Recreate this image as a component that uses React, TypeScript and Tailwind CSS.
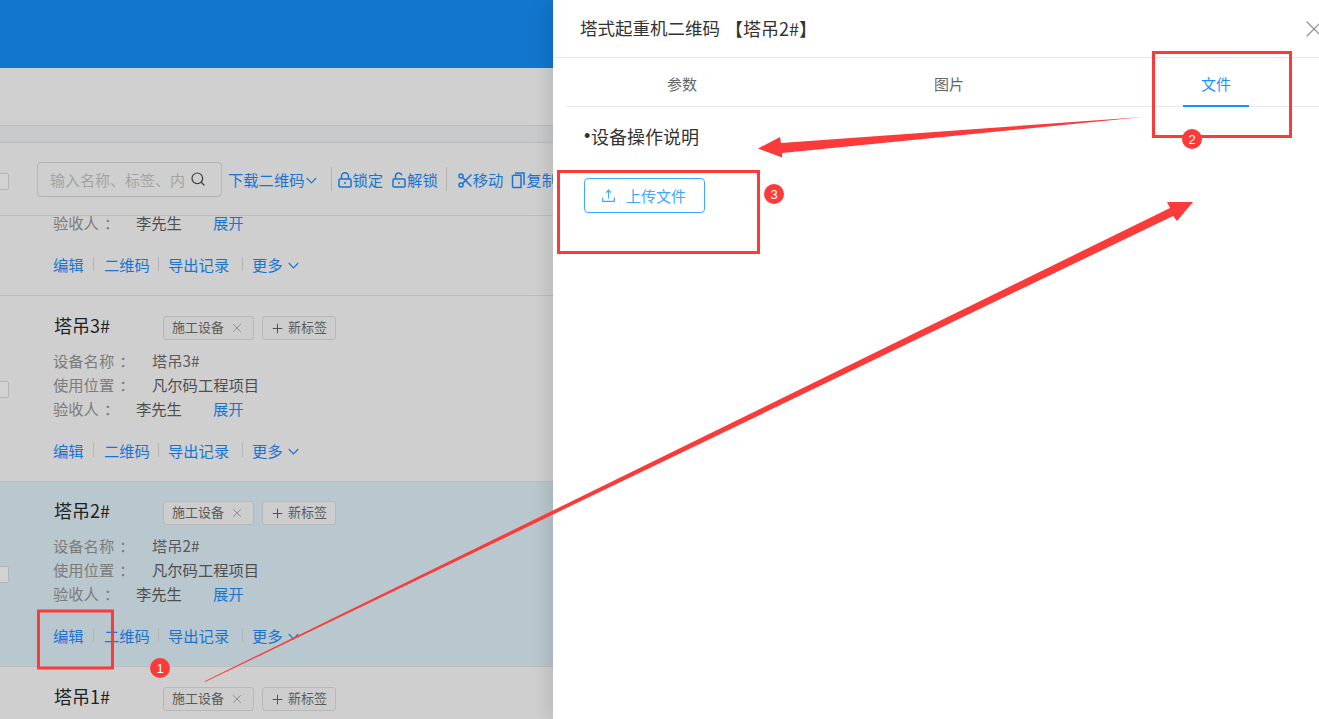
import React from "react";
import { Search, X, Plus } from "lucide-react";

const FONT = "font-['Noto_Sans_CJK_SC','Noto_Sans',sans-serif]";

function Chevron({ className }: { className?: string }) {
  return (
    <svg className={className} width="11" height="7" viewBox="0 0 11 7" fill="none" stroke="currentColor" strokeWidth="1.1">
      <polyline points="0.8,1 5.5,6 10.2,1" />
    </svg>
  );
}

function LockIcon({ open, className }: { open?: boolean; className?: string }) {
  return (
    <svg className={className} width="14" height="16" viewBox="0 0 14 16" fill="none" stroke="currentColor" strokeWidth="1.5">
      <rect x="1" y="7" width="12" height="8" rx="1" />
      <path d={open ? "M3.5 7V4.2a3.3 3.3 0 0 1 6.4 -1" : "M3.5 7V4.2a3.5 3.5 0 0 1 7 0V7"} />
      <path d="M7 10v2" />
    </svg>
  );
}

function ScissorsIcon({ className }: { className?: string }) {
  return (
    <svg className={className} width="14" height="15" viewBox="0 0 14 15" fill="none" stroke="currentColor" strokeWidth="1.5">
      <circle cx="3" cy="3" r="2" />
      <circle cx="3" cy="12" r="2" />
      <path d="M4.5 4.4 13.5 13.5M4.5 10.6 13.5 1.5" />
    </svg>
  );
}

function CopyIcon({ className }: { className?: string }) {
  return (
    <svg className={className} width="14" height="17" viewBox="0 0 14 17" fill="none" stroke="currentColor" strokeWidth="1.5">
      <path d="M4 1h9v12" />
      <path d="M2 3.2h8v12.3H5l-1 0H2.5a1 1 0 0 1-1-1V3.2" />
    </svg>
  );
}

function UploadIcon({ className }: { className?: string }) {
  return (
    <svg className={className} width="13" height="13" viewBox="0 0 13 13" fill="none" stroke="currentColor" strokeWidth="1.2">
      <path d="M0.7 8.5v3.8h11.6V8.5" />
      <path d="M6.5 9.5V1.2M4 3.6l2.5-2.6L9 3.6" />
    </svg>
  );
}

function Tags() {
  return (
    <div className="flex items-center gap-2 ml-[53px] translate-y-[3px]">
      <div className="flex items-center h-[24px] w-[91px] pl-2 border border-[#b8b8b8] rounded-[3px] bg-[#cdcdcd] text-[13px] text-[#5a5a5a]">
        <span className="-translate-y-[1px]">施工设备</span>
        <X className="w-[14px] h-[14px] ml-[6px] text-[#7f7f7f]" strokeWidth={1.4} />
      </div>
      <div className="flex items-center h-[24px] w-[74px] pl-[7px] border border-[#b8b8b8] rounded-[3px] bg-[#cdcdcd] text-[13px] text-[#5a5a5a]">
        <Plus className="w-[15px] h-[15px] mr-[3px] text-[#4a4a4a]" strokeWidth={1.5} />
        <span className="-translate-y-[1px]">新标签</span>
      </div>
    </div>
  );
}

function Sep() {
  return <span className="w-px h-[14px] bg-[#b4b4b4]" />;
}

function Actions({ className }: { className?: string }) {
  return (
    <div className={`flex items-center h-[24px] text-[15.3px] text-[#1a74d2] ${className ?? ""}`}>
      <span className="w-[40px] -ml-px">编辑</span>
      <Sep />
      <span className="w-[54px] ml-[10px]">二维码</span>
      <Sep />
      <span className="w-[74px] ml-[9px]">导出记录</span>
      <Sep />
      <span className="ml-[9px]">更多</span>
      <Chevron className="ml-[5px] translate-y-[1px]" />
    </div>
  );
}

function Label({ text }: { text: string }) {
  return (
    <>
      {text}
      <span className="ml-[5px]">：</span>
    </>
  );
}

function Row({ name, active }: { name: string; active?: boolean }) {
  return (
    <div className={`relative shrink-0 border-b border-[#bdbdbd] pl-[54px] ${active ? "h-[185px] bg-[#b9c7ce]" : "h-[186px] bg-[#cfcfcf]"}`}>
      <div className={`absolute left-[-8px] w-[17px] h-[17px] border border-[#b4b4b4] rounded-[2px] bg-[#d2d2d2] ${active ? "top-[84px]" : "top-[85px]"}`} />
      <div className={`flex items-center h-[24px] ${active ? "mt-[16px]" : "mt-[17px]"}`}>
        <span className="w-[56px] text-[18px] leading-[24px] text-[#222]">{name}</span>
        <Tags />
      </div>
      <div className="mt-[11px] text-[15.3px] leading-[24px] text-[#7c7c7c]">
        <div className="flex h-[24px] items-center">
          <span className="w-[99px] -ml-px">
            <Label text="设备名称" />
          </span>
          <span className="text-[#5a5a5a]">{name}</span>
        </div>
        <div className="flex h-[24px] items-center">
          <span className="w-[99px] -ml-px">
            <Label text="使用位置" />
          </span>
          <span className="text-[#4f4f4f]">凡尔码工程项目</span>
        </div>
        <div className="flex h-[24px] items-center">
          <span className="w-[83px] -ml-px">
            <Label text="验收人" />
          </span>
          <span className="w-[77px] text-[#4f4f4f]">李先生</span>
          <span className="text-[#1a74d2]">展开</span>
        </div>
      </div>
      <Actions className="mt-[18px]" />
    </div>
  );
}

function PartialRow() {
  return (
    <div className="relative shrink-0 h-[80px] overflow-hidden border-b border-[#bdbdbd] bg-[#cfcfcf] pl-[54px]">
      <div className="flex h-[24px] items-center -mt-[6px] text-[15.3px] text-[#7c7c7c]">
        <span className="w-[83px] -ml-px">
          <Label text="验收人" />
        </span>
        <span className="w-[77px] text-[#4f4f4f]">李先生</span>
        <span className="text-[#1a74d2]">展开</span>
      </div>
      <Actions className="mt-[18px]" />
    </div>
  );
}

function Toolbar() {
  return (
    <div className="relative shrink-0 h-[73px] border-b border-[#bdbdbd] bg-[#cfcfcf] flex items-center text-[15.3px] text-[#1a74d2] whitespace-nowrap overflow-hidden">
      <div className="shrink-0 -ml-[8px] w-[17px] h-[17px] translate-y-[2px] border border-[#b4b4b4] rounded-[2px] bg-[#d2d2d2]" />
      <div className="shrink-0 ml-[28px] flex items-center w-[185px] h-[35px] pl-[12px] border border-[#b4b4b4] rounded-[4px]">
        <span className="w-[140px] overflow-hidden text-[15px] text-[#a3a3a3] translate-y-[1px]">输入名称、标签、内</span>
        <Search className="w-[16px] h-[16px] text-[#3c3c3c]" strokeWidth={1.8} />
      </div>
      <span className="shrink-0 ml-[6px]">下载二维码</span>
      <Chevron className="shrink-0 ml-[1px] translate-y-[1px]" />
      <span className="shrink-0 ml-[14px] w-px h-[24px] bg-[#b4b4b4]" />
      <LockIcon className="shrink-0 ml-[6px] translate-y-[1px]" />
      <span className="shrink-0 ml-[1px]">锁定</span>
      <LockIcon open className="shrink-0 ml-[9px] translate-y-[1px]" />
      <span className="shrink-0 ml-[1px]">解锁</span>
      <span className="shrink-0 ml-[8px] w-px h-[24px] bg-[#b4b4b4]" />
      <ScissorsIcon className="shrink-0 ml-[11px] translate-y-[1px]" />
      <span className="shrink-0 ml-[1px]">移动</span>
      <CopyIcon className="shrink-0 ml-[8px] translate-y-[1px]" />
      <span className="shrink-0 ml-[1px]">复制</span>
    </div>
  );
}

function Annotations() {
  const c = "#fb3a3a";
  return (
    <svg className="absolute inset-0 z-20 pointer-events-none" width="1319" height="719" viewBox="0 0 1319 719">
      <polygon points="205,682 204.6,681.2 1170,208 1167,202 1193,202 1177,221 1173,216" fill={c} />
      <polygon points="1143,117 781,143 780,137 758,148.5 782,157.5 782,153" fill={c} />
      <rect x="38.5" y="611" width="74" height="57" fill="none" stroke={c} strokeWidth="3" />
      <rect x="1153.5" y="52.5" width="137" height="84" fill="none" stroke={c} strokeWidth="3" />
      <rect x="558.5" y="171.5" width="200" height="81" fill="none" stroke={c} strokeWidth="3" />
      <circle cx="160" cy="668" r="10" fill={c} />
      <circle cx="1192" cy="139" r="10" fill={c} />
      <circle cx="774" cy="194" r="10" fill={c} />
      <text x="160" y="673" textAnchor="middle" fontSize="13" fill="#fff" fontFamily="Liberation Sans, sans-serif">1</text>
      <text x="1192" y="144" textAnchor="middle" fontSize="13" fill="#fff" fontFamily="Liberation Sans, sans-serif">2</text>
      <text x="774" y="199" textAnchor="middle" fontSize="13" fill="#fff" fontFamily="Liberation Sans, sans-serif">3</text>
    </svg>
  );
}

function Drawer() {
  return (
    <div className="relative z-10 shrink-0 w-[766px] h-full bg-white flex flex-col shadow-[-6px_0_16px_rgba(0,0,0,0.10)]">
      <div className="relative shrink-0 h-[58px] border-b border-[#e8e8e8] flex items-center pl-[27px] text-[17.5px] text-[#333]">
        <span>塔式起重机二维码</span>
        <span className="ml-[5px] text-[18px]">【塔吊2#】</span>
        <X className="absolute left-[747px] top-[15px] w-[28px] h-[28px] text-[#8c8c8c]" strokeWidth={1} />
      </div>
      <div className="shrink-0 ml-[13px] w-[753px] h-[49px] border-b border-[#e8e8e8] grid grid-cols-[232px_302px_232px] text-[15px] text-[#666]">
        <div className="flex items-center justify-center pt-[5px]">参数</div>
        <div className="flex items-center justify-center pt-[5px]">图片</div>
        <div className="relative flex items-center justify-center pt-[5px] text-[#1890ff]">
          文件
          <span className="absolute left-[83px] bottom-[-1px] w-[66px] h-[2px] bg-[#1890ff]" />
        </div>
      </div>
      <div className="flex pl-[31px] pt-[15px] text-[18px] leading-[28px] text-[#333]">
        <span className="font-['Liberation_Sans',sans-serif] w-[7px]">•</span>
        <span>设备操作说明</span>
      </div>
      <button className="ml-[31px] mt-[28px] w-[121px] h-[35px] flex items-center pl-[17px] border border-[#40a9ff] rounded-[4px] text-[15px] text-[#40a9ff]">
        <UploadIcon className="mr-[11px]" />
        <span className="translate-y-[1px]">上传文件</span>
      </button>
    </div>
  );
}

export default function App() {
  return (
    <div className={`relative flex w-[1319px] h-[719px] overflow-hidden bg-white ${FONT}`}>
      <div className="shrink-0 w-[553px] h-full flex flex-col overflow-hidden bg-[#cfcfcf]">
        <div className="shrink-0 h-[68px] bg-[#1276ce] shadow-[0_2px_6px_rgba(0,0,0,0.15)]" />
        <div className="shrink-0 h-[58px] bg-[#d0d0d0] border-b border-[#bcbcbc]" />
        <div className="shrink-0 h-[17px] bg-[#c9cacc] border-b border-[#bdbdbd]" />
        <Toolbar />
        <PartialRow />
        <Row name="塔吊3#" />
        <Row name="塔吊2#" active />
        <Row name="塔吊1#" />
      </div>
      <Drawer />
      <Annotations />
    </div>
  );
}
